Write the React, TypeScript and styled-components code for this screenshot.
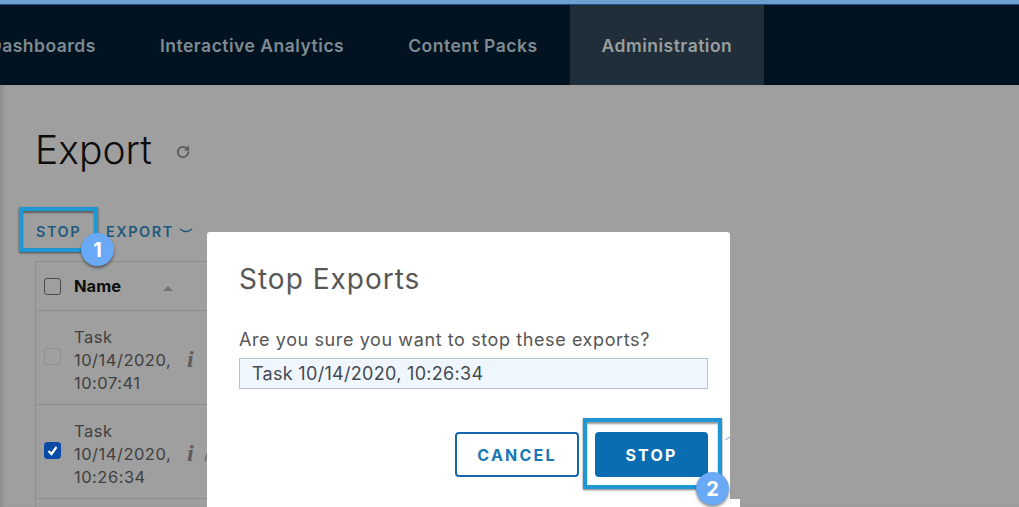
import React from 'react';
import styled, { createGlobalStyle } from 'styled-components';
import { RotateCw } from 'lucide-react';

const GlobalStyle = createGlobalStyle`
  html, body {
    margin: 0;
    padding: 0;
    background: #9f9f9f;
  }
  body {
    font-family: Inter, "Noto Sans", Arial, sans-serif;
  }
`;

const Page = styled.div`
  position: relative;
  width: 1019px;
  height: 507px;
  overflow: hidden;
  background: #9f9f9f;
  border-top: 4px solid #6f9fd0;
  box-sizing: border-box;
`;

const NavBar = styled.nav`
  display: flex;
  height: 81px;
  margin-left: -43px;
  background: #011321;
  border-top: 1px solid #1d4f86;
  box-sizing: border-box;
`;

const NavTab = styled.div<{ $active?: boolean }>`
  display: flex;
  align-items: center;
  padding: 0 32px;
  font-size: 17.5px;
  font-weight: 600;
  letter-spacing: 0.5px;
  color: ${(p) => (p.$active ? '#9a9ea1' : '#7f8a91')};
  background: ${(p) => (p.$active ? '#1f2e38' : 'transparent')};
`;

const Content = styled.main`
  height: 422px;
  box-sizing: border-box;
  padding: 42px 0 0 35px;
  box-shadow: inset 4px 0 4px -2px rgba(0, 0, 0, 0.14);
`;

const TitleRow = styled.div`
  display: flex;
  align-items: center;
  gap: 24px;
  height: 44px;
`;

const Title = styled.h1`
  margin: 0;
  font-size: 39px;
  font-weight: 300;
  color: #0d0d0d;
`;

const RefreshIcon = styled(RotateCw)`
  margin-top: 5px;
`;

const Toolbar = styled.div`
  display: flex;
  align-items: center;
  gap: 25px;
  margin: 47px 0 0 1px;
  height: 26px;
`;

const ToolAction = styled.span`
  display: flex;
  align-items: center;
  gap: 5px;
  font-size: 14.5px;
  font-weight: 600;
  letter-spacing: 1.5px;
  color: #1f5a7d;
`;

const Table = styled.div`
  width: 200px;
  margin-top: 17px;
  border: 1px solid #8c8c8c;
  border-right: 0;
`;

const HeaderRow = styled.div`
  display: flex;
  align-items: center;
  gap: 13px;
  height: 48px;
  padding-left: 8px;
  font-size: 16.5px;
  font-weight: 700;
  color: #0d0d0d;
  border-bottom: 1px solid #8c8c8c;
`;

const SortArrow = styled.span`
  width: 0;
  height: 0;
  margin: 5px 0 0 29px;
  border-left: 5px solid transparent;
  border-right: 5px solid transparent;
  border-bottom: 5px solid #6f6f6f;
`;

const Row = styled.div`
  display: flex;
  align-items: center;
  gap: 13px;
  height: 93px;
  padding-left: 8px;
  border-bottom: 1px solid #8c8c8c;
`;

const Check = styled.span<{ $state: 'empty' | 'disabled' | 'checked' }>`
  display: flex;
  align-items: center;
  justify-content: center;
  flex: none;
  width: 17px;
  height: 17px;
  box-sizing: border-box;
  border-radius: 3px;
  background: ${(p) => (p.$state === 'checked' ? '#0b4ba5' : 'transparent')};
  border: 1px solid
    ${(p) =>
      p.$state === 'checked'
        ? '#0b4ba5'
        : p.$state === 'disabled'
          ? '#8e8e8e'
          : '#4a4a4a'};

  ${Row} & {
    margin-bottom: 3px;
  }
`;

const RowLabel = styled.div`
  width: 100px;
  margin-top: 5px;
  font-size: 16.5px;
  line-height: 23px;
  letter-spacing: 0.5px;
  color: #404040;
`;

const InfoMark = styled.span`
  margin-top: 4px;
  font-family: "Liberation Serif", serif;
  font-size: 24px;
  font-style: italic;
  font-weight: 700;
  color: #5c5c5c;
`;

// second row action, almost all of it is behind the dialog
const ClippedIcon = styled.svg`
  margin: 10px 0 0 -3px;
`;

const Modal = styled.section`
  position: absolute;
  left: 207px;
  top: 228px;
  width: 523px;
  height: 290px;
  box-sizing: border-box;
  padding: 29px 22px 0 32px;
  background: #fff;
  border-radius: 3px 3px 0 0;
`;

const ModalEdge = styled.div`
  position: absolute;
  left: 730px;
  top: 495px;
  width: 10px;
  height: 12px;
  background: #fff;
`;

const ModalTick = styled.div`
  position: absolute;
  left: 725px;
  top: 434px;
  width: 5px;
  height: 1px;
  background: #7fb2dc;
  transform: rotate(-30deg);
`;

const ModalTitle = styled.h2`
  margin: 0;
  font-size: 28px;
  line-height: 36px;
  font-weight: 400;
  letter-spacing: 1px;
  color: #575757;
`;

const ModalText = styled.p`
  margin: 31px 0 0;
  font-size: 18px;
  line-height: 24px;
  letter-spacing: 0.6px;
  color: #565656;
`;

const SelectedList = styled.div`
  display: flex;
  align-items: center;
  height: 31px;
  margin-top: 6px;
  padding-left: 12px;
  box-sizing: border-box;
  background: #eff6fe;
  border: 1px solid #b5c3d1;
  font-size: 18px;
  letter-spacing: 0.3px;
  color: #444a50;
`;

const ModalActions = styled.div`
  display: flex;
  justify-content: flex-end;
  gap: 16px;
  margin-top: 43px;
`;

const ActionButton = styled.button<{ $primary?: boolean }>`
  width: ${(p) => (p.$primary ? '113px' : '124px')};
  height: 45px;
  font-family: inherit;
  font-size: 16px;
  font-weight: 700;
  letter-spacing: 2.2px;
  border-radius: 4px;
  color: ${(p) => (p.$primary ? '#fff' : '#1a78b4')};
  background: ${(p) => (p.$primary ? '#0a6db2' : '#fff')};
  border: 2px solid ${(p) => (p.$primary ? '#0a6db2' : '#1666ae')};
`;

const Highlight = styled.div<{ $left: number; $top: number; $w: number; $h: number }>`
  position: absolute;
  left: ${(p) => p.$left}px;
  top: ${(p) => p.$top}px;
  width: ${(p) => p.$w}px;
  height: ${(p) => p.$h}px;
  box-sizing: border-box;
  border: 4px solid #1f97d4;
  box-shadow: 0 1px 2px rgba(0, 0, 0, 0.55), inset 0 2px 2px rgba(0, 0, 0, 0.4);
`;

const Badge = styled.div<{ $left: number; $top: number }>`
  position: absolute;
  left: ${(p) => p.$left}px;
  top: ${(p) => p.$top}px;
  display: flex;
  align-items: center;
  justify-content: center;
  width: 33px;
  height: 33px;
  border-radius: 50%;
  background: #6aa9f5;
  box-shadow: 0 2px 3px rgba(0, 0, 0, 0.45);
  font-size: 20px;
  font-weight: 700;
  color: #fff;
`;

export default function App() {
  return (
    <Page>
      <GlobalStyle />
      <NavBar>
        <NavTab>Dashboards</NavTab>
        <NavTab>Interactive Analytics</NavTab>
        <NavTab>Content Packs</NavTab>
        <NavTab $active>Administration</NavTab>
      </NavBar>
      <Content>
        <TitleRow>
          <Title>Export</Title>
          <RefreshIcon size={14} color="#5a5a5a" strokeWidth={3} />
        </TitleRow>
        <Toolbar>
          <ToolAction>STOP</ToolAction>
          <ToolAction>
            EXPORT
            <svg width="14" height="6" viewBox="0 0 14 6">
              <path d="M1 1 Q7 6 13 1" fill="none" stroke="#1f5a7d" strokeWidth="1.5" />
            </svg>
          </ToolAction>
        </Toolbar>
        <Table>
          <HeaderRow>
            <Check $state="empty" />
            Name
            <SortArrow />
          </HeaderRow>
          <Row>
            <Check $state="disabled" />
            <RowLabel>Task 10/14/2020, 10:07:41</RowLabel>
            <InfoMark>i</InfoMark>
          </Row>
          <Row>
            <Check $state="checked">
              <svg width="13" height="13" viewBox="0 0 13 13">
                <path d="M2.5 7 L5.5 10 L10.5 3" fill="none" stroke="#fff" strokeWidth="2.2" />
              </svg>
            </Check>
            <RowLabel>Task 10/14/2020, 10:26:34</RowLabel>
            <InfoMark>i</InfoMark>
            <ClippedIcon width="4" height="10" viewBox="0 0 4 10">
              <path d="M1 9 L3 2" fill="none" stroke="#6a6a6a" strokeWidth="1.5" />
            </ClippedIcon>
          </Row>
          <Row />
        </Table>
      </Content>
      <Modal>
        <ModalTitle>Stop Exports</ModalTitle>
        <ModalText>Are you sure you want to stop these exports?</ModalText>
        <SelectedList>Task 10/14/2020, 10:26:34</SelectedList>
        <ModalActions>
          <ActionButton>CANCEL</ActionButton>
          <ActionButton $primary>STOP</ActionButton>
        </ModalActions>
      </Modal>
      <ModalEdge />
      <ModalTick />
      <Highlight $left={19} $top={203} $w={79} $h={45} />
      <Highlight $left={583} $top={414} $w={139} $h={71} />
      <Badge $left={81} $top={229}>1</Badge>
      <Badge $left={696} $top={468}>2</Badge>
    </Page>
  );
}
